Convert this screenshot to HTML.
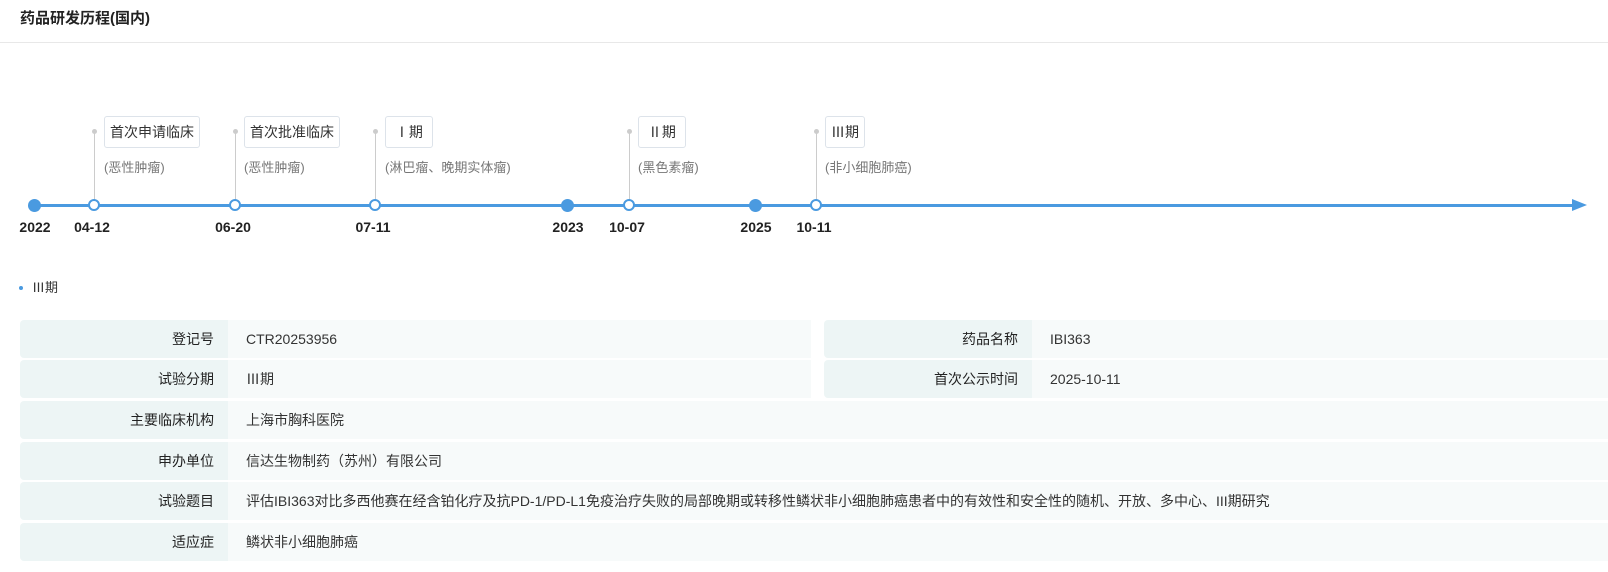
<!DOCTYPE html>
<html><head><meta charset="utf-8"><style>
*{margin:0;padding:0;box-sizing:border-box}
body{width:1608px;height:572px;background:#fff;font-family:"Liberation Sans","Noto Sans CJK SC",sans-serif;color:#333;position:relative;overflow:hidden}
.a{position:absolute;white-space:nowrap}
.title{left:20px;top:7px;font-size:15px;font-weight:bold;color:#222;line-height:23px}
.hr{left:0;top:42px;width:1608px;height:1px;background:#e8e8e8}
.line{left:34px;top:204px;width:1540px;height:3px;background:#4a9ae0}
.arrow{left:1572px;top:199px;width:0;height:0;border-left:15px solid #4a9ae0;border-top:6.5px solid transparent;border-bottom:6.5px solid transparent}
.fd{width:13px;height:13px;border-radius:50%;background:#4a9ae0;top:199px}
.hd{width:12px;height:12px;border-radius:50%;background:#fff;border:2.5px solid #4a9ae0;top:199px}
.stem{width:1px;background:#ccc;top:132px;height:68px}
.sd{width:5px;height:5px;border-radius:50%;background:#ccc;top:129px}
.tag{top:116px;height:32px;border:1px solid #dde3ea;border-radius:3px;font-size:14px;line-height:30px;padding:0 5px;color:#333;background:#fff}
.sub{top:159px;font-size:13px;color:#777;line-height:18px}
.lb{top:217px;font-size:14px;font-weight:bold;color:#222;line-height:20px;transform:translateX(-50%)}
.lab{background:#edf5f5;border-radius:4px 0 0 4px;font-size:14px;text-align:right;padding-right:14px;line-height:38px;height:38px;color:#222;font-weight:normal}
.val{background:#f7fafa;font-size:14px;padding-left:18px;line-height:38px;height:38px;color:#333}
</style></head><body>
<div class="a title">药品研发历程(国内)</div>
<div class="a hr"></div>

<div class="a line"></div>
<div class="a arrow"></div>

<div class="a fd" style="left:28px"></div>
<div class="a fd" style="left:561px"></div>
<div class="a fd" style="left:749px"></div>

<div class="a stem" style="left:94px"></div><div class="a sd" style="left:92px"></div>
<div class="a stem" style="left:235px"></div><div class="a sd" style="left:233px"></div>
<div class="a stem" style="left:375px"></div><div class="a sd" style="left:373px"></div>
<div class="a stem" style="left:629px"></div><div class="a sd" style="left:627px"></div>
<div class="a stem" style="left:816px"></div><div class="a sd" style="left:814px"></div>

<div class="a hd" style="left:88px"></div>
<div class="a hd" style="left:229px"></div>
<div class="a hd" style="left:369px"></div>
<div class="a hd" style="left:623px"></div>
<div class="a hd" style="left:810px"></div>

<div class="a tag" style="left:104px">首次申请临床</div>
<div class="a tag" style="left:244px">首次批准临床</div>
<div class="a tag" style="left:385px">&nbsp;Ⅰ期&nbsp;</div>
<div class="a tag" style="left:638px">&nbsp;Ⅱ期&nbsp;</div>
<div class="a tag" style="left:825px">Ⅲ期</div>

<div class="a sub" style="left:104px">(恶性肿瘤)</div>
<div class="a sub" style="left:244px">(恶性肿瘤)</div>
<div class="a sub" style="left:385px">(淋巴瘤、晚期实体瘤)</div>
<div class="a sub" style="left:638px">(黑色素瘤)</div>
<div class="a sub" style="left:825px">(非小细胞肺癌)</div>

<div class="a lb" style="left:35px">2022</div>
<div class="a lb" style="left:92px">04-12</div>
<div class="a lb" style="left:233px">06-20</div>
<div class="a lb" style="left:373px">07-11</div>
<div class="a lb" style="left:568px">2023</div>
<div class="a lb" style="left:627px">10-07</div>
<div class="a lb" style="left:756px">2025</div>
<div class="a lb" style="left:814px">10-11</div>

<div class="a" style="left:19px;top:286px;width:4px;height:4px;border-radius:50%;background:#4a9ae0"></div>
<div class="a" style="left:32px;top:279px;font-size:13px;line-height:18px;color:#333">Ⅲ期</div>

<div class="a lab" style="left:20px;top:320px;width:208px">登记号</div>
<div class="a val" style="left:228px;top:320px;width:583px">CTR20253956</div>
<div class="a lab" style="left:824px;top:320px;width:208px">药品名称</div>
<div class="a val" style="left:1032px;top:320px;width:576px">IBI363</div>

<div class="a lab" style="left:20px;top:360px;width:208px">试验分期</div>
<div class="a val" style="left:228px;top:360px;width:583px">Ⅲ期</div>
<div class="a lab" style="left:824px;top:360px;width:208px">首次公示时间</div>
<div class="a val" style="left:1032px;top:360px;width:576px">2025-10-11</div>

<div class="a lab" style="left:20px;top:401px;width:208px">主要临床机构</div>
<div class="a val" style="left:228px;top:401px;width:1380px">上海市胸科医院</div>

<div class="a lab" style="left:20px;top:442px;width:208px">申办单位</div>
<div class="a val" style="left:228px;top:442px;width:1380px">信达生物制药（苏州）有限公司</div>

<div class="a lab" style="left:20px;top:482px;width:208px">试验题目</div>
<div class="a val" style="left:228px;top:482px;width:1380px">评估IBI363对比多西他赛在经含铂化疗及抗PD-1/PD-L1免疫治疗失败的局部晚期或转移性鳞状非小细胞肺癌患者中的有效性和安全性的随机、开放、多中心、III期研究</div>

<div class="a lab" style="left:20px;top:523px;width:208px">适应症</div>
<div class="a val" style="left:228px;top:523px;width:1380px">鳞状非小细胞肺癌</div>
</body></html>
